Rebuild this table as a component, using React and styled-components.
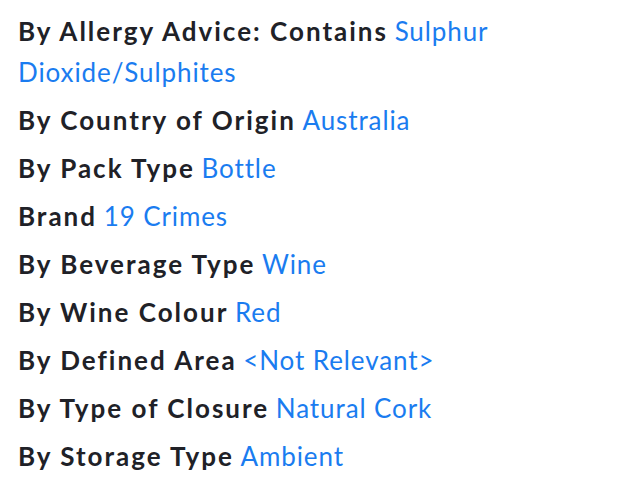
import React from "react"
import styled, { createGlobalStyle } from "styled-components"

const GlobalStyle = createGlobalStyle`
  html, body {
    margin: 0;
    padding: 0;
    background: #ffffff;
  }
  body {
    font-family: Lato, "Noto Sans", sans-serif;
  }
`

const List = styled.ul`
  list-style: none;
  margin: 0;
  padding: 11px 18px 0 18px;
  width: 520px;
`

const Item = styled.li`
  font-size: 26px;
  line-height: 41px;
  margin-bottom: 7px;
`

const Label = styled.span`
  font-weight: 700;
  color: #202127;
  letter-spacing: 2px;
`

const Value = styled.span`
  color: #1a7cf0;
  letter-spacing: 0.9px;
`

const attributes = [
  ["By Allergy Advice: Contains", "Sulphur Dioxide/Sulphites"],
  ["By Country of Origin", "Australia"],
  ["By Pack Type", "Bottle"],
  ["Brand", "19 Crimes"],
  ["By Beverage Type", "Wine"],
  ["By Wine Colour", "Red"],
  ["By Defined Area", "<Not Relevant>"],
  ["By Type of Closure", "Natural Cork"],
  ["By Storage Type", "Ambient"],
]

const App = () => (
  <>
    <GlobalStyle />
    <List>
      {attributes.map(([label, value]) => (
        <Item key={label}>
          <Label>{label}</Label> <Value>{value}</Value>
        </Item>
      ))}
    </List>
  </>
)

export default App
